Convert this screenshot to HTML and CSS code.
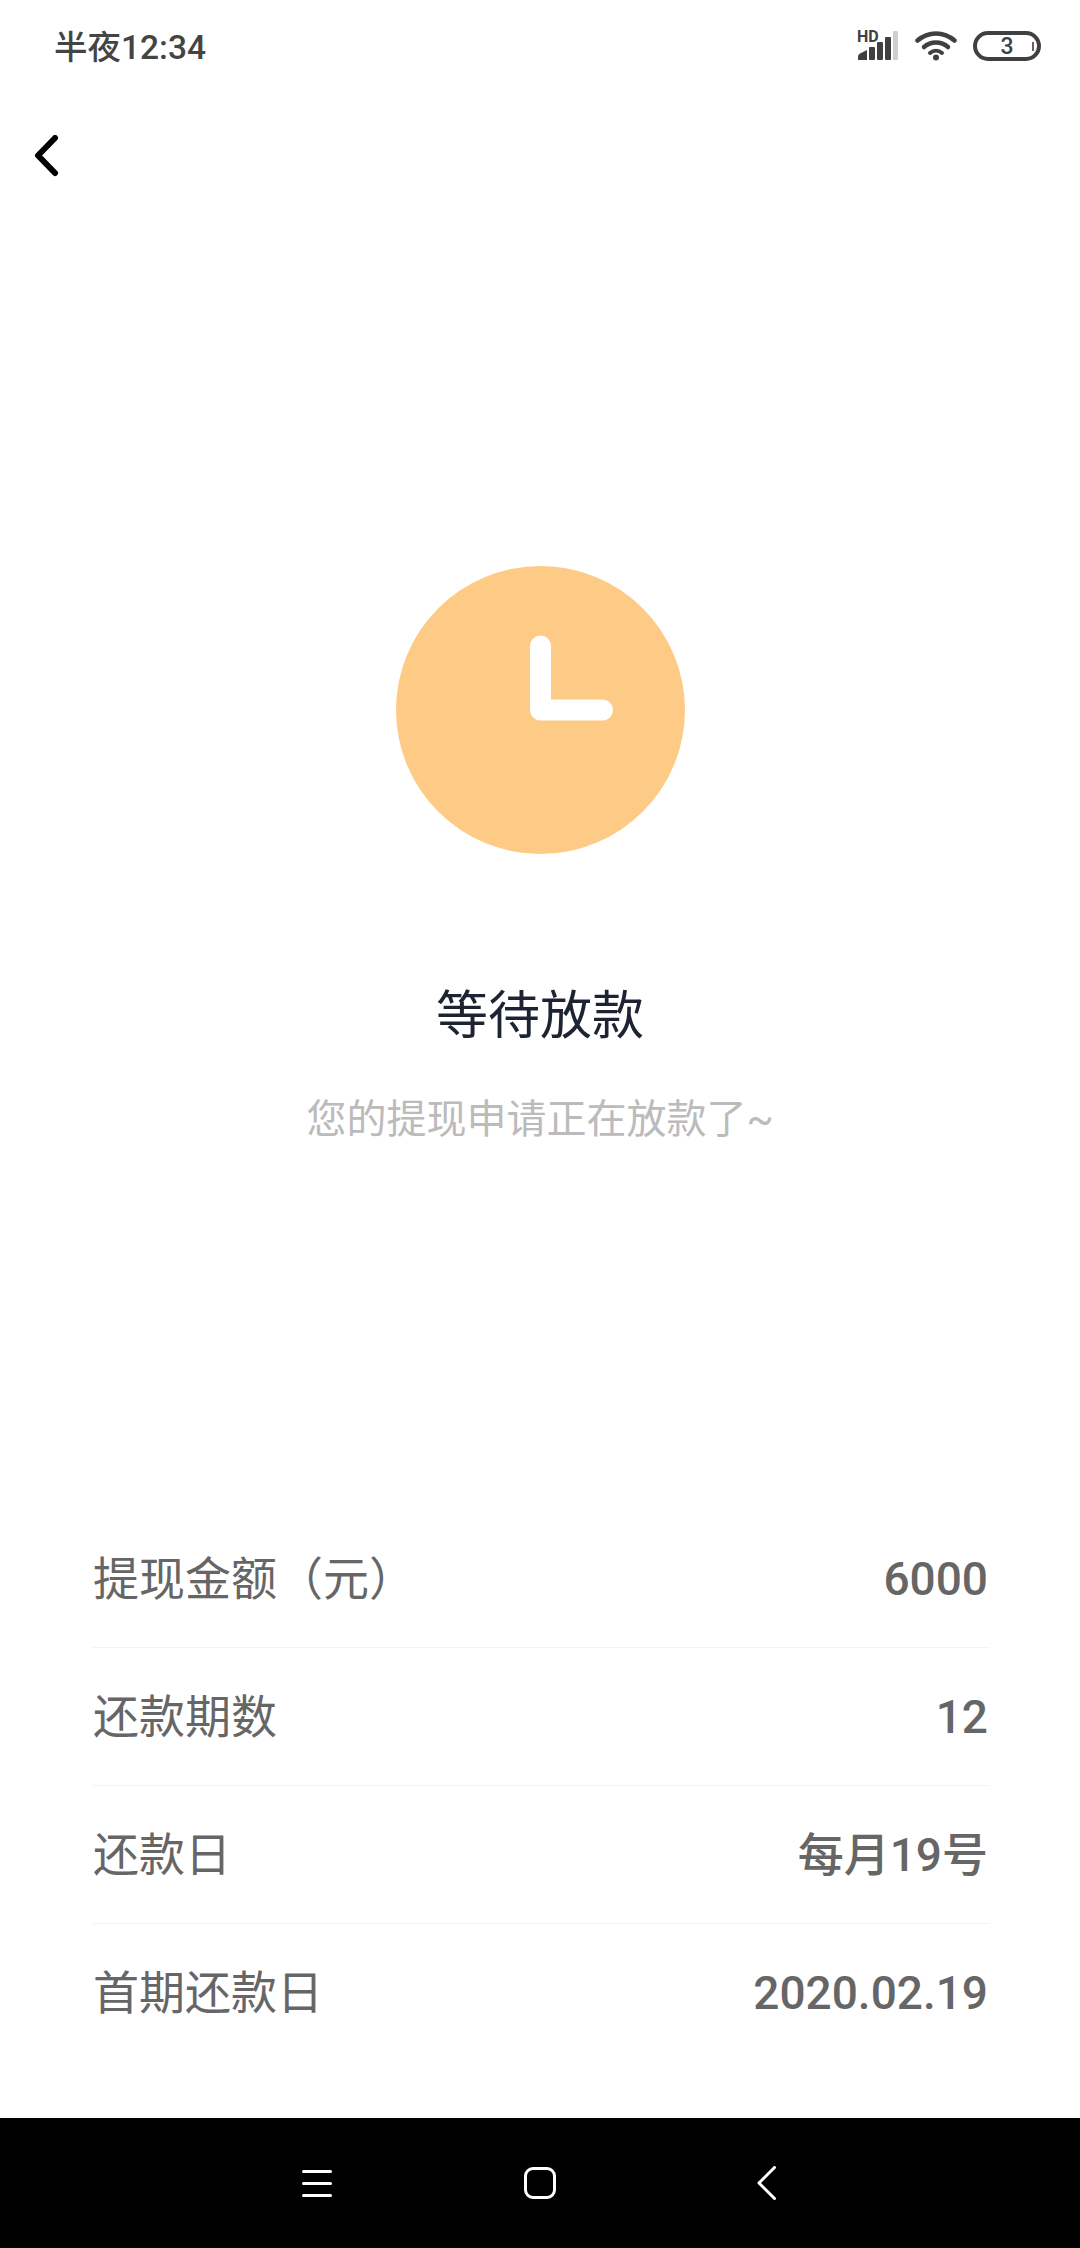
FILE: index.html
```html
<!doctype html>
<html lang="zh-CN">
  <head>
    <meta charset="UTF-8" />
    <meta name="viewport" content="width=device-width, initial-scale=1.0" />
    <title>等待放款</title>
    <link rel="stylesheet" href="styles.css">
  </head>
  <body>
    <div class="page">
      <div class="status-bar">
        <span class="status-time">半夜12:34</span>
        <div class="status-icons">
          <div class="signal">
            <span class="signal-hd">HD</span>
            <svg width="42" height="30" viewBox="0 0 42 30">
              <path d="M1 29v-3q0-3 3-4l6-3v10z" fill="#404040" />
              <rect x="12" y="16" width="6" height="13" rx="1" fill="#404040" />
              <rect x="20" y="11" width="6" height="18" rx="1" fill="#404040" />
              <rect x="28" y="6" width="6" height="23" rx="1" fill="#404040" />
              <rect x="36" y="0" width="5" height="29" rx="1" fill="#cfcfcf" />
            </svg>
          </div>
          <svg class="wifi" width="42" height="30" viewBox="0 0 42 30" fill="none" stroke="#404040" stroke-width="4.5" stroke-linecap="round">
            <path d="M2.500 9.500c10.500-9.500 26.500-9.500 37 0" />
            <path d="M9 16c6.800-6 17.200-6 24 0" />
            <path d="M15 22c3.500-3 8.500-3 12 0" stroke-width="4" />
            <circle cx="21" cy="26.500" r="3" fill="#404040" stroke="none" />
          </svg>
          <div class="battery">3<span class="battery-level"></span></div>
        </div>
      </div>

      <div class="top-nav">
        <svg width="26" height="42" viewBox="0 0 26 42" fill="none" stroke="#000" stroke-width="6" stroke-linecap="round" stroke-linejoin="round">
          <path d="M21 3 4 20.500 21 38" />
        </svg>
      </div>

      <div class="result">
        <svg class="clock" width="289" height="288" viewBox="0 0 289 288">
          <ellipse cx="144.500" cy="144" rx="144.500" ry="144" fill="#fdcb85" />
          <path d="M144.500 80v64h62" fill="none" stroke="#fff" stroke-width="21" stroke-linecap="round" stroke-linejoin="round" />
        </svg>
        <h1 class="result-title">等待放款</h1>
        <p class="result-desc">您的提现申请正在放款了~</p>
      </div>

      <div class="detail-list">
        <div class="detail-row">
          <span class="detail-label">提现金额（元）</span>
          <span class="detail-value">6000</span>
        </div>
        <div class="detail-row">
          <span class="detail-label">还款期数</span>
          <span class="detail-value">12</span>
        </div>
        <div class="detail-row">
          <span class="detail-label">还款日</span>
          <span class="detail-value">每月19号</span>
        </div>
        <div class="detail-row">
          <span class="detail-label">首期还款日</span>
          <span class="detail-value">2020.02.19</span>
        </div>
      </div>

      <div class="nav-bar">
        <div class="nav-menu"><span></span><span></span><span></span></div>
        <div class="nav-home"></div>
        <svg class="nav-back" width="20" height="34" viewBox="0 0 20 34" fill="none" stroke="#fff" stroke-width="3" stroke-linecap="round" stroke-linejoin="round">
          <path d="M17.500 1.500 2 17l15.500 15.500" />
        </svg>
      </div>
    </div>
  </body>
</html>
```

FILE: styles.css
```css
body {
  margin: 0;
  background: #fff;
  font-family: Roboto, "Noto Sans CJK SC", sans-serif;
}
.page {
  display: flex;
  flex-direction: column;
  width: 1080px;
  height: 2248px;
  overflow: hidden;
}
.status-bar {
  display: flex;
  align-items: center;
  justify-content: space-between;
  box-sizing: border-box;
  height: 96px;
  padding: 0 39px 4px 54px;
}
.status-time {
  margin-top: 3px;
  font-size: 33.5px;
  line-height: 44px;
  font-weight: 500;
  color: #444;
}
.status-icons {
  display: flex;
  align-items: center;
  gap: 16px;
}
.signal {
  position: relative;
  width: 42px;
  height: 30px;
}
.signal svg {
  display: block;
}
.signal-hd {
  position: absolute;
  top: -1px;
  left: 0;
  font-size: 16px;
  line-height: 14px;
  font-weight: 700;
  color: #404040;
}
.wifi {
  display: block;
}
.battery {
  position: relative;
  display: flex;
  align-items: center;
  justify-content: center;
  box-sizing: border-box;
  width: 68px;
  height: 30px;
  border: 4px solid #404040;
  border-radius: 15px;
  font-size: 23px;
  font-weight: 500;
  color: #404040;
}
.battery-level {
  position: absolute;
  top: 7px;
  right: 3px;
  width: 2px;
  height: 9px;
  background: #7a5a60;
}
.top-nav {
  height: 42px;
  padding: 39px 0 0 34px;
}
.top-nav svg {
  display: block;
}
.result {
  display: flex;
  flex-direction: column;
  align-items: center;
  margin-top: 389px;
}
.clock {
  display: block;
  margin-left: 1px;
}
.result-title {
  margin: 127px 0 0;
  font-size: 52px;
  line-height: 72px;
  font-weight: 400;
  color: #1c2433;
}
.result-desc {
  margin: 39px 0 0;
  font-size: 40px;
  line-height: 56px;
  color: #bbb;
}
.detail-list {
  margin: 362px 90px 0 93px;
}
.detail-row {
  display: flex;
  align-items: center;
  justify-content: space-between;
  height: 137px;
  border-bottom: 1px solid #f3f3f3;
  font-size: 46px;
  line-height: 60px;
  color: #666;
}
.detail-row:last-child {
  border-bottom: 0;
}
.detail-value {
  font-weight: 500;
  margin-right: 2px;
}
.nav-bar {
  display: flex;
  align-items: center;
  gap: 192px;
  box-sizing: border-box;
  height: 130px;
  margin-top: auto;
  padding-left: 302px;
  background: #000;
}
.nav-menu {
  display: flex;
  flex-direction: column;
  gap: 9px;
  width: 30px;
}
.nav-menu span {
  height: 3px;
  border-radius: 2px;
  background: #fff;
}
.nav-home {
  box-sizing: border-box;
  width: 32px;
  height: 32px;
  border: 3px solid #fff;
  border-radius: 9px;
}
.nav-back {
  margin-left: 9px;
}
```
